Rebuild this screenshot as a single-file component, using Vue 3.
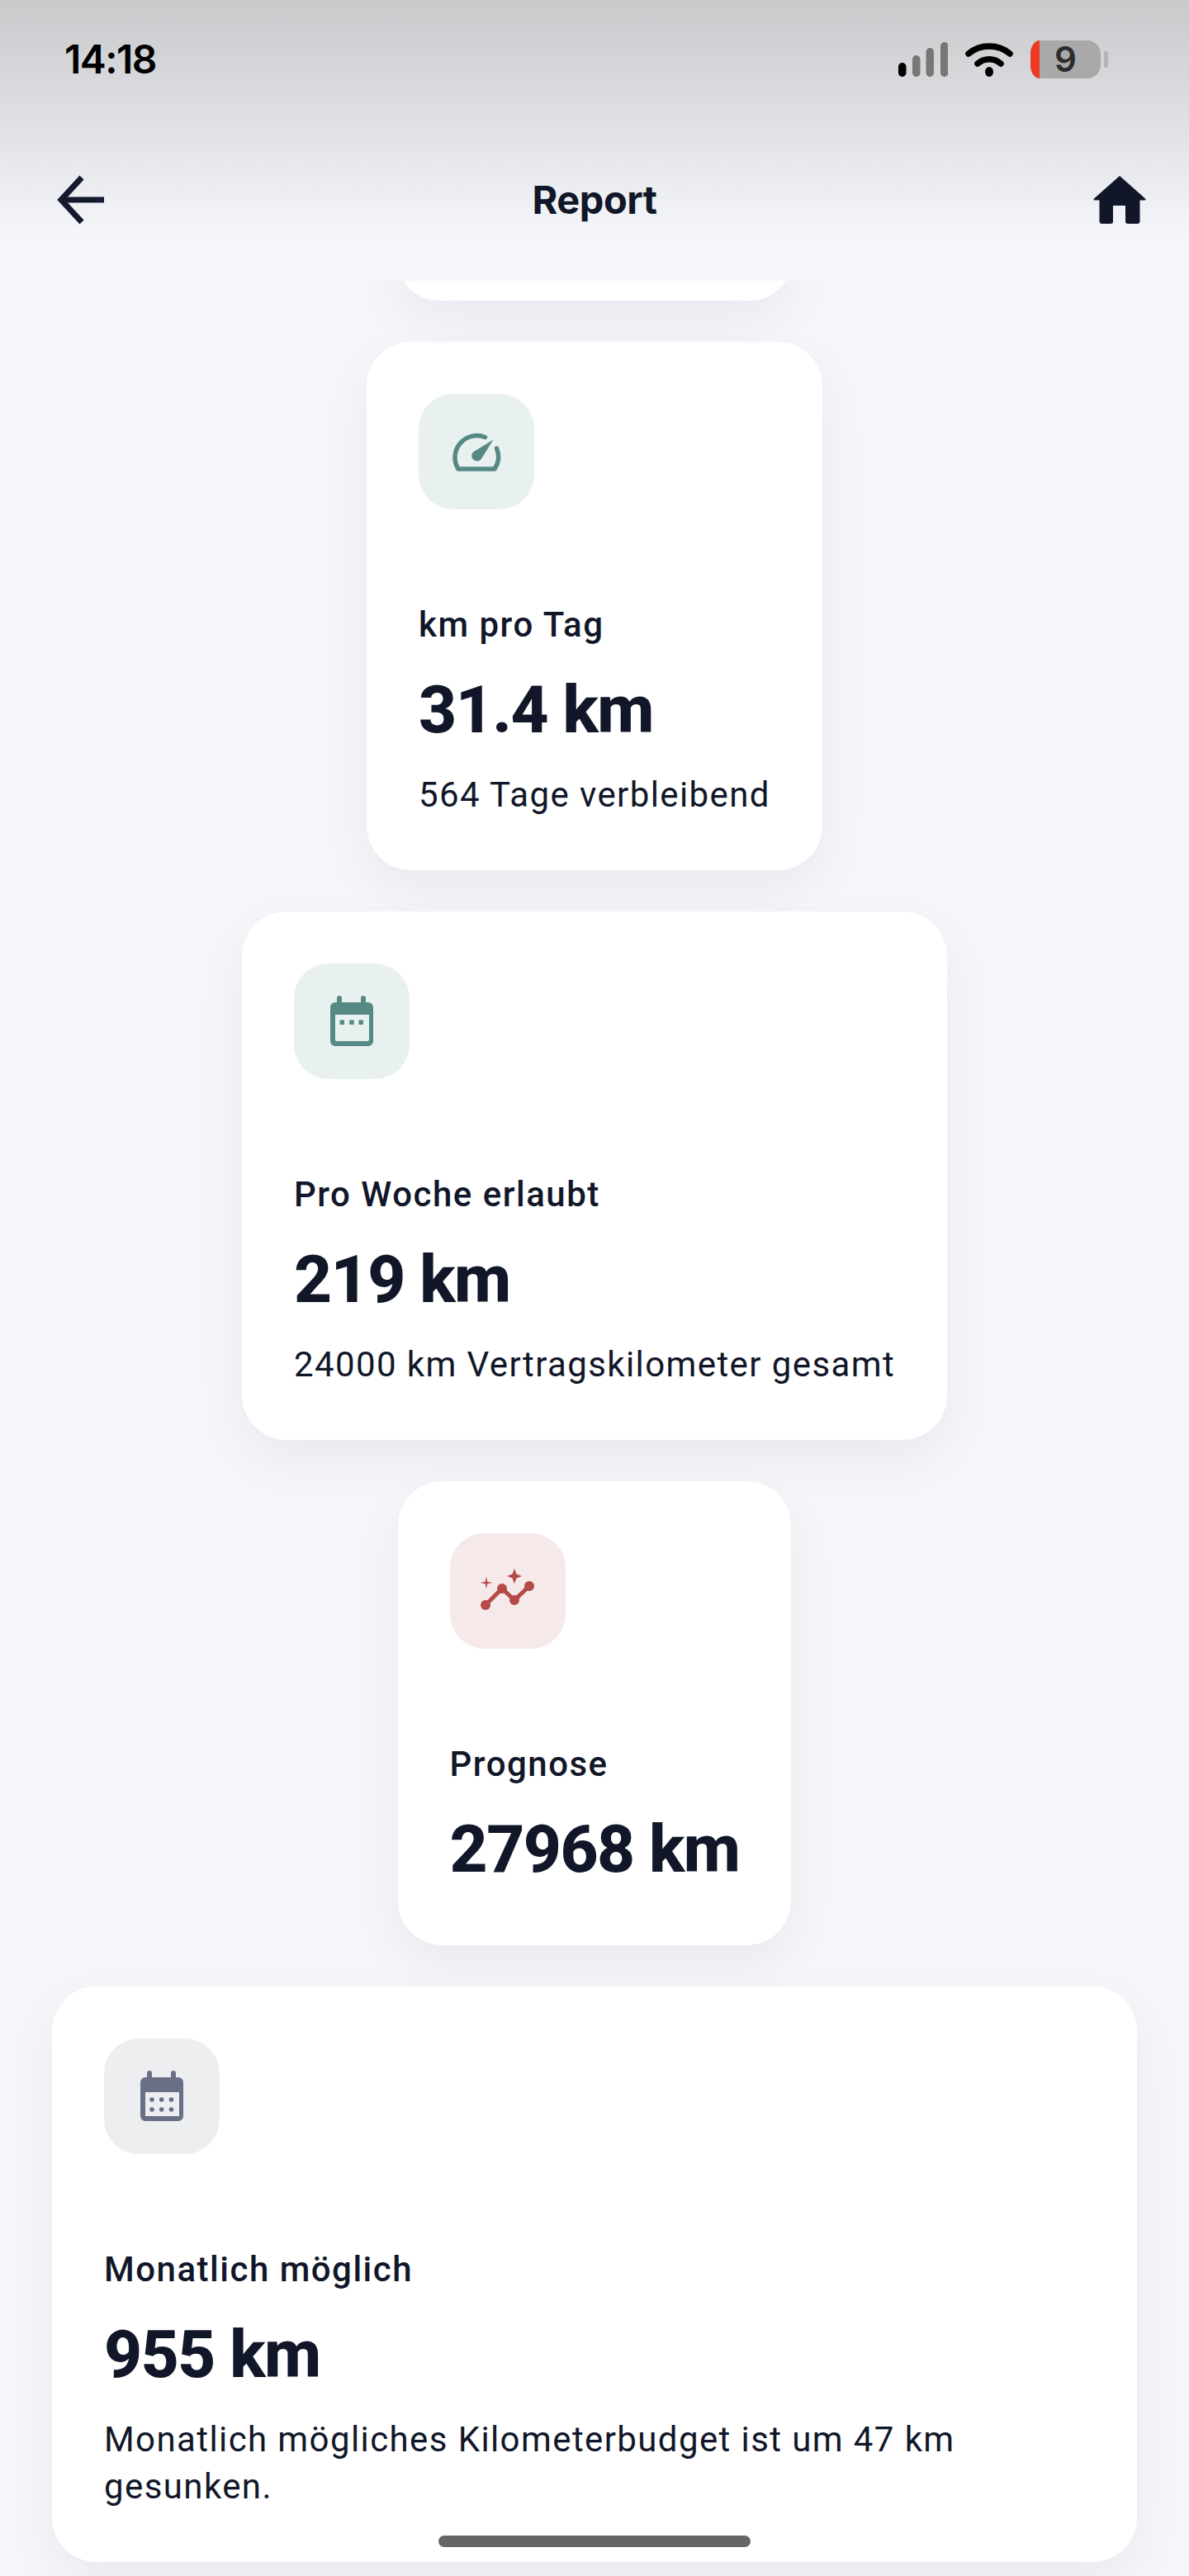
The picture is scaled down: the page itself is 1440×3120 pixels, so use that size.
<script setup>
const cards = [
  { id: 'pace', tone: 'teal', icon: 'gauge', label: 'km pro Tag', value: '31.4 km', note: '564 Tage verbleibend' },
  { id: 'week', tone: 'teal', icon: 'week', label: 'Pro Woche erlaubt', value: '219 km', note: '24000 km Vertragskilometer gesamt' },
  { id: 'forecast', tone: 'red', icon: 'trend', label: 'Prognose', value: '27968 km' },
  { id: 'month', tone: 'gray', icon: 'month', label: 'Monatlich möglich', value: '955 km', note: 'Monatlich mögliches Kilometerbudget ist um 47 km gesunken.' }
]
</script>

<template>
  <div class="screen">
    <header class="top">
      <div class="status">
        <span class="time">14:18</span>
        <div class="status-icons">
          <svg class="signal" width="60" height="42" viewBox="0 0 60 42">
            <rect x="0" y="25" width="9.5" height="17" rx="4.7" fill="#000" />
            <rect x="17" y="16" width="9.5" height="26" rx="4.7" fill="#777" />
            <rect x="33.5" y="7" width="9.5" height="35" rx="4.7" fill="#777" />
            <rect x="51" y="0" width="9.5" height="42" rx="4.7" fill="#777" />
          </svg>
          <svg class="wifi" width="58" height="42" viewBox="0 0 58 42" fill="none" stroke="#000" stroke-width="7.5" stroke-linecap="round">
            <path d="M4 14C18 2 40 2 54 14" />
            <path d="M15 26C23 19 35 19 43 26" />
            <ellipse cx="29" cy="36" rx="5" ry="6" fill="#000" stroke="none" />
          </svg>
          <div class="battery">
            <div class="battery-body"><span class="battery-low"></span><span class="battery-level">9</span></div>
            <span class="battery-cap"></span>
          </div>
        </div>
      </div>
      <nav class="bar">
        <svg class="back" width="60" height="60" viewBox="0 0 60 60" fill="none" stroke="#141a2e" stroke-width="7">
          <path d="M58 30H5" />
          <path d="M31 3L6 30L31 57" />
        </svg>
        <h1 class="title">Report</h1>
        <svg class="home" width="64" height="58" viewBox="0 0 64 58">
          <path fill="#111729" d="M32 0L63 27.500Q64.500 29.500 62 29.500H56.500V55Q56.500 58 53.500 58H42Q39 58 39 55V36H24V55Q24 58 21 58H10.500Q7.500 58 7.500 55V29.500H2Q-.5 29.500 1 27.500Z" />
        </svg>
      </nav>
    </header>

    <main class="list">
      <div class="card stub"></div>

      <section v-for="card in cards" :key="card.id" class="card" :class="card.id">
        <div class="badge" :class="card.tone">
          <svg width="140" height="140" viewBox="0 0 140 140">
            <g v-if="card.icon === 'gauge'">
              <path d="M80.500 52.500A26.500 26.500 0 0 0 48 91H92A26.500 26.500 0 0 0 94.500 66" fill="none" stroke="currentColor" stroke-width="5.500" stroke-linecap="round" stroke-linejoin="round" />
              <path d="M90.500 55.500L75.500 79.500A6.500 6.500 0 0 1 66 70.500Z" fill="currentColor" />
            </g>
            <g v-else-if="card.icon === 'week'">
              <path fill="currentColor" fill-rule="evenodd" d="M52 42a3 3 0 0 1 6 0v5h23v-5a3 3 0 0 1 6 0v5h3a6 6 0 0 1 6 6v41a6 6 0 0 1-6 6H50a6 6 0 0 1-6-6V53a6 6 0 0 1 6-6h2zM50 62v30a2 2 0 0 0 2 2h37a2 2 0 0 0 2-2V62z" />
              <rect x="55.500" y="68.500" width="5.500" height="5.500" fill="currentColor" />
              <rect x="67.200" y="68.500" width="5.500" height="5.500" fill="currentColor" />
              <rect x="78.500" y="68.500" width="5.500" height="5.500" fill="currentColor" />
            </g>
            <g v-else-if="card.icon === 'trend'">
              <path d="M43 87L63 67L78 81L96 64" fill="none" stroke="currentColor" stroke-width="5" />
              <circle cx="43" cy="87" r="6" fill="currentColor" />
              <circle cx="63" cy="67" r="6" fill="currentColor" />
              <circle cx="78" cy="81" r="6" fill="currentColor" />
              <circle cx="96" cy="64" r="6" fill="currentColor" />
              <path d="M78 43L80.500 49.500L87 52L80.500 54.500L78 61L75.500 54.500L69 52L75.500 49.500Z" fill="currentColor" />
              <path d="M44 52.500L45.300 58.700L51.500 60L45.300 61.300L44 67.500L42.700 61.300L36.500 60L42.700 58.700Z" fill="currentColor" />
            </g>
            <g v-else>
              <path fill="currentColor" fill-rule="evenodd" d="M52 42a3 3 0 0 1 6 0v5h23v-5a3 3 0 0 1 6 0v5h3a6 6 0 0 1 6 6v41a6 6 0 0 1-6 6H50a6 6 0 0 1-6-6V53a6 6 0 0 1 6-6h2zM50 65v29h41V65z" />
              <g fill="currentColor">
                <circle cx="58" cy="74" r="2.800" />
                <circle cx="69.700" cy="74" r="2.800" />
                <circle cx="81.500" cy="74" r="2.800" />
                <circle cx="58" cy="86" r="2.800" />
                <circle cx="69.700" cy="86" r="2.800" />
                <circle cx="81.500" cy="86" r="2.800" />
              </g>
            </g>
          </svg>
        </div>
        <h2 class="label">{{ card.label }}</h2>
        <p class="value">{{ card.value }}</p>
        <p v-if="card.note" class="note">{{ card.note }}</p>
      </section>
    </main>

    <span class="home-line"></span>
  </div>
</template>

<style>
html, body { margin: 0; background: #f5f6fa; }
</style>

<style scoped>
.screen {
  position: relative;
  width: 1440px;
  height: 3120px;
  overflow: hidden;
  background: #f5f6fa;
  font-family: Roboto, "Liberation Sans", sans-serif;
  color: #111729;
}
.top {
  position: relative;
  z-index: 2;
  height: 340px;
  box-sizing: border-box;
  padding-top: 49px;
  background: linear-gradient(#c8c9cb 0, #f5f6fa 285px);
}
.status {
  display: flex;
  justify-content: space-between;
  align-items: center;
  height: 46px;
  padding: 0 98px 0 78px;
}
.time {
  font-family: Inter, sans-serif;
  font-weight: 600;
  font-size: 48px;
  line-height: 46px;
  letter-spacing: -1.500px;
  color: #000;
}
.status-icons {
  display: flex;
  align-items: center;
}
.signal { margin-right: 21px; }
.wifi { margin-right: 21px; }
.battery {
  display: flex;
  align-items: center;
}
.battery-body {
  position: relative;
  width: 85px;
  height: 46px;
  border-radius: 16px;
  background: #a9a9aa;
  display: flex;
  align-items: center;
  justify-content: center;
}
.battery-low {
  position: absolute;
  left: 0;
  top: 0;
  bottom: 0;
  width: 11px;
  border-radius: 11px 0 0 11px / 16px 0 0 16px;
  background: #ee3a24;
}
.battery-level {
  font-family: Inter, sans-serif;
  font-weight: 600;
  font-size: 42px;
  line-height: 46px;
  color: #2c2c2c;
}
.battery-cap {
  width: 5px;
  height: 20px;
  margin-left: 4px;
  border-radius: 0 3px 3px 0;
  background: #b5b5b7;
}
.bar {
  display: grid;
  grid-template-columns: 1fr auto 1fr;
  align-items: center;
  height: 60px;
  margin-top: 117px;
  padding: 0 52px 0 68px;
}
.home { justify-self: end; }
.title {
  margin: 0 16px 0 0;
  font-family: Inter, sans-serif;
  font-size: 47px;
  font-weight: 700;
  line-height: 60px;
  letter-spacing: -0.500px;
  color: #111729;
}
.list {
  display: flex;
  flex-direction: column;
  align-items: center;
  gap: 50px;
}
.card {
  box-sizing: border-box;
  padding: 63px 63px 0;
  background: #fff;
  border-radius: 54px;
  box-shadow: 0 24px 60px rgba(17, 23, 41, 0.05);
}
.stub {
  width: 478px;
  height: 100px;
  margin-top: -76px;
  flex: none;
}
.pace { height: 640px; }
.week { height: 640px; }
.forecast { height: 562px; }
.month { width: 1314px; height: 697px; }
.badge {
  width: 140px;
  height: 140px;
  border-radius: 42px;
}
.badge svg { display: block; }
.teal { background: #e9f1f0; color: #558a84; }
.red { background: #f5e9e9; color: #b54a46; }
.gray { background: #eceef0; color: #697087; }
.label {
  margin: 112px 0 0;
  font-size: 42px;
  font-weight: 500;
  line-height: 56px;
  letter-spacing: 1.500px;
  white-space: nowrap;
}
.value {
  margin: 25px 0 0;
  font-size: 80px;
  font-weight: 800;
  line-height: 100px;
  letter-spacing: -1.500px;
  white-space: nowrap;
}
.note {
  margin: 24px 0 0;
  font-size: 42px;
  font-weight: 400;
  line-height: 57px;
  letter-spacing: 1.400px;
}
.home-line {
  position: absolute;
  left: 531px;
  top: 3071px;
  width: 378px;
  height: 14px;
  border-radius: 7px;
  background: #666;
}
</style>
